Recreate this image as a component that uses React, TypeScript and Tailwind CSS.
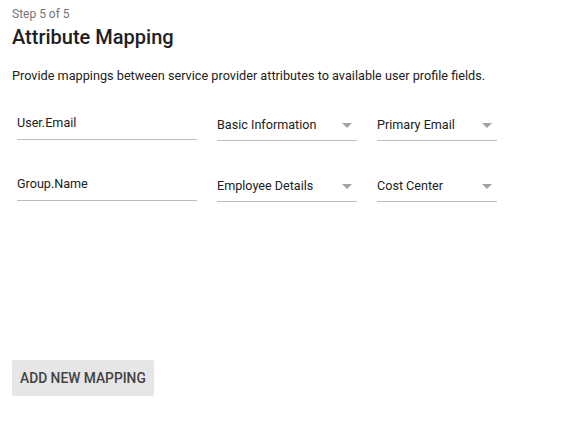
import React from 'react';

interface Mapping {
  attribute: string;
  category: string;
  field: string;
}

const mappings: Mapping[] = [
  { attribute: 'User.Email', category: 'Basic Information', field: 'Primary Email' },
  { attribute: 'Group.Name', category: 'Employee Details', field: 'Cost Center' },
];

const Caret = () => (
  <svg width="10" height="5" viewBox="0 0 10 5" className="absolute right-[5px] top-[12px]">
    <path d="M0 0 L10 0 L5 5 Z" fill="#a3a3a3" />
  </svg>
);

const SelectField: React.FC<{ value: string; width: string }> = ({ value, width }) => (
  <div className={`relative ${width} h-[30px] border-b border-[#bdbdbd] mt-[1px]`}>
    <div className="pt-[6px] text-[12.6px] text-[#212121] leading-[16px]">{value}</div>
    <Caret />
  </div>
);

export default function App() {
  return (
    <div className="w-[581px] h-[448px] bg-white px-3 pt-[6px] font-['Roboto',sans-serif]">
      <div className="text-[12px] leading-[16px] text-[#757575]">Step 5 of 5</div>
      <h1 className="text-[20px] leading-[28px] font-medium text-[#212121] mt-[1px]">Attribute Mapping</h1>
      <p className="text-[12.7px] leading-[18px] text-[#212121] mt-[16px]">
        Provide mappings between service provider attributes to available user profile fields.
      </p>

      <div className="mt-[25px] ml-[5px] flex flex-col gap-[30px]">
        {mappings.map((m) => (
          <div key={m.attribute} className="flex items-start gap-5">
            <div className="w-[180px] h-[30px] border-b border-[#bdbdbd]">
              <div className="pt-[5px] text-[12.6px] text-[#212121] leading-[16px]">{m.attribute}</div>
            </div>
            <SelectField value={m.category} width="w-[140px]" />
            <SelectField value={m.field} width="w-[120px]" />
          </div>
        ))}
      </div>

      <button className="mt-[158px] h-9 px-2 rounded-[2px] bg-[#e6e6e6] text-[13.8px] font-medium text-[#424242] uppercase">
        Add New Mapping
      </button>
    </div>
  );
}
